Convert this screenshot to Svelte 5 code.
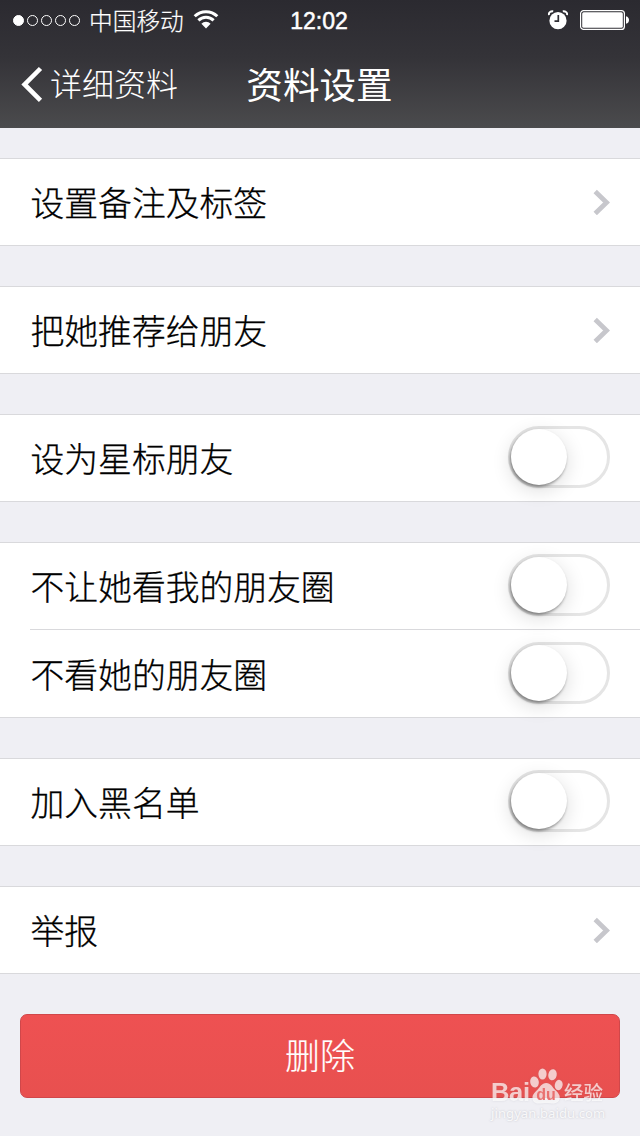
<script>
    let groups = $state([
        [{ label: '设置备注及标签', type: 'link' }],
        [{ label: '把她推荐给朋友', type: 'link' }],
        [{ label: '设为星标朋友', type: 'switch', on: false }],
        [
            { label: '不让她看我的朋友圈', type: 'switch', on: false },
            { label: '不看她的朋友圈', type: 'switch', on: false }
        ],
        [{ label: '加入黑名单', type: 'switch', on: false }],
        [{ label: '举报', type: 'link' }]
    ]);

    const signal = [true, false, false, false, false];

    function toggle(row) {
        row.on = !row.on;
    }
</script>

<div class="page">
    <header>
        <div class="status-bar">
            <div class="carrier">
                <div class="dots">
                    {#each signal as filled}
                        <span class="dot" class:filled></span>
                    {/each}
                </div>
                <span class="carrier-name">中国移动</span>
                <svg class="wifi" width="26" height="20" viewBox="0 0 26 20">
                    <path d="M1.7 6.3a16 16 0 0 1 22.6 0" />
                    <path d="M5.4 10.4a10.8 10.8 0 0 1 15.2 0" />
                    <path class="solid" d="M13 18.5l-4.6-4.8a6.5 6.5 0 0 1 9.2 0z" />
                </svg>
            </div>
            <span class="time">12:02</span>
            <div class="indicators">
                <svg class="alarm" width="20" height="20" viewBox="0 0 20 20">
                    <circle cx="10" cy="10.7" r="8.6" fill="#fff" />
                    <path d="M.8 5.2C.6 2.6 2.4.9 5.2 1.2M19.2 5.2c.2-2.6-1.6-4.3-4.4-4" stroke="#fff" stroke-width="2" fill="none" />
                    <path d="M10.3 5v6.2H6.5" stroke="#302f35" stroke-width="1.7" fill="none" />
                </svg>
                <svg class="battery" width="50" height="20" viewBox="0 0 50 20">
                    <rect x=".6" y=".6" width="43.8" height="18.8" rx="3" fill="none" stroke="#fff" stroke-width="1.2" />
                    <rect x="2.2" y="2.2" width="40.6" height="15.6" rx="1.5" fill="#fff" />
                    <path d="M46 6.2c4 .7 4 6.9 0 7.6z" fill="#fff" />
                </svg>
            </div>
        </div>
        <nav>
            <button class="back">
                <svg width="22" height="36" viewBox="0 0 22 36">
                    <path d="M19.5 2.5L3.6 18.5l15.9 15.8" fill="none" stroke="#fff" stroke-width="4.6" />
                </svg>
                <span>详细资料</span>
            </button>
            <h1>资料设置</h1>
        </nav>
    </header>

    <main>
        {#each groups as group}
            <section class="group">
                {#each group as row}
                    <div class="row">
                        <span class="label">{row.label}</span>
                        {#if row.type === 'switch'}
                            <button
                                class="switch"
                                class:on={row.on}
                                role="switch"
                                aria-checked={row.on}
                                aria-label={row.label}
                                onclick={() => toggle(row)}
                            >
                                <span class="knob"></span>
                            </button>
                        {:else}
                            <svg class="chevron" width="17" height="26" viewBox="0 0 17 26">
                                <path d="M2.2 2.5L13.6 13.5 2.2 24.5" fill="none" stroke="#c7c7cc" stroke-width="4.8" />
                            </svg>
                        {/if}
                    </div>
                {/each}
            </section>
        {/each}

        <button class="delete">删除</button>
    </main>

    <div class="watermark">
        <div class="brand">
            <span class="bai">Bai</span>
            <svg width="34" height="36" viewBox="0 0 34 36">
                <ellipse cx="5.5" cy="14" rx="4.3" ry="5.6" transform="rotate(-12 5.5 14)" />
                <ellipse cx="13.5" cy="6" rx="4.1" ry="5.6" />
                <ellipse cx="23.5" cy="6.8" rx="4.2" ry="5.6" transform="rotate(12 23.5 6.8)" />
                <ellipse cx="29.7" cy="17" rx="3.9" ry="5.2" transform="rotate(12 29.7 17)" />
                <path d="M17.2 15c4.6 0 6 4 8.500 6.600 3 3 5.500 5 5 9-.4 3-2.800 4.900-6 4.900-3 0-4.500-.6-7.500-.6s-4.500.6-7.500.6c-3.400 0-6-2-6.200-5.300-.2-3.800 2.500-5.800 5.200-8.600 2.500-2.600 4-6.600 8.500-6.600z" />
                <text x="17" y="32" text-anchor="middle">du</text>
            </svg>
            <span class="jingyan">经验</span>
        </div>
        <span class="domain">jingyan.baidu.com</span>
    </div>
</div>

<style>
    :global(body) {
        margin: 0;
        background: #efeff4;
    }

    .page {
        position: relative;
        width: 640px;
        height: 1136px;
        overflow: hidden;
        background: #efeff4;
        color: #000;
        font-family: "Noto Sans CJK SC", sans-serif;
        font-weight: 300;
    }

    button {
        font: inherit;
        color: inherit;
        padding: 0;
        border: none;
        background: none;
        cursor: pointer;
    }

    svg {
        display: block;
        flex: none;
    }

    header {
        height: 128px;
        background: linear-gradient(#2b2a30, #343338 45%, #4b4b4d);
        color: #fff;
    }

    .status-bar {
        display: grid;
        grid-template-columns: 1fr auto 1fr;
        align-items: center;
        height: 40px;
        padding: 0 10px 0 13px;
    }

    .carrier {
        display: flex;
        align-items: center;
    }

    .dots {
        display: flex;
        gap: 3px;
        margin-right: 9px;
    }

    .dot {
        box-sizing: border-box;
        width: 11px;
        height: 11px;
        border: 1px solid #fff;
        border-radius: 50%;
    }

    .dot.filled {
        background: #fff;
    }

    .carrier-name {
        font-size: 23.7px;
        line-height: 40px;
        -webkit-text-stroke: 0.2px #fff;
    }

    .wifi {
        margin-left: 9px;
        fill: none;
        stroke: #fff;
        stroke-width: 3;
    }

    .wifi .solid {
        fill: #fff;
        stroke: none;
    }

    .time {
        margin: 2px 5px 0 0;
        font-family: "Liberation Sans", sans-serif;
        font-size: 23px;
        font-weight: 400;
        -webkit-text-stroke: 0.5px #fff;
    }

    .indicators {
        display: flex;
        justify-content: flex-end;
        gap: 12px;
    }

    nav {
        display: grid;
        grid-template-columns: 1fr auto 1fr;
        align-items: center;
        height: 88px;
    }

    .back {
        display: flex;
        align-items: center;
        gap: 7px;
        padding-left: 21px;
        font-size: 32px;
        line-height: 84px;
    }

    .back span {
        margin-top: -4px;
    }

    h1 {
        margin: -1px 1px 0 0;
        font-size: 36.6px;
        font-weight: 400;
        line-height: 88px;
    }

    main {
        display: flex;
        flex-direction: column;
        gap: 40px;
        padding-top: 30px;
    }

    .group {
        box-sizing: border-box;
        border-top: 1px solid #d9d9dc;
        border-bottom: 1px solid #d9d9dc;
        background: #fff;
    }

    .row {
        box-sizing: border-box;
        display: flex;
        align-items: center;
        justify-content: space-between;
        height: 86px;
        margin-left: 30px;
        padding-right: 30px;
    }

    .row + .row {
        height: 88px;
        border-top: 1px solid #d9d9dc;
    }

    .label {
        padding-left: 0.5px;
        font-size: 33.8px;
        line-height: 86px;
        -webkit-text-stroke: 0.3px #000;
    }

    .switch {
        box-sizing: border-box;
        width: 102px;
        height: 62px;
        margin-top: -2px;
        border: 3px solid #e5e5e5;
        border-radius: 31px;
        background: #fff;
    }

    .switch.on {
        border-color: #4cd964;
        background: #4cd964;
    }

    .knob {
        display: block;
        width: 56px;
        height: 56px;
        border-radius: 50%;
        background: #fff;
        box-shadow: -1px 2px 3px rgba(0, 0, 0, 0.4), 0 5px 20px rgba(0, 0, 0, 0.14);
    }

    .switch.on .knob {
        margin-left: 40px;
    }

    .delete {
        box-sizing: border-box;
        height: 84px;
        margin: 0 20px;
        padding-bottom: 4px;
        border: 1px solid #d0474a;
        border-radius: 7px;
        background: linear-gradient(#ee5152, #e8504f);
        color: #fff;
        font-size: 35px;
        line-height: 76px;
        -webkit-text-stroke: 0.2px #fff;
    }

    .watermark {
        position: absolute;
        left: 491px;
        top: 1067px;
        width: 120px;
        color: rgba(255, 255, 255, 0.7);
    }

    .brand {
        display: flex;
        align-items: flex-end;
        height: 37px;
        filter: drop-shadow(0 0 1px rgba(120, 120, 130, 0.25));
    }

    .brand svg {
        fill: rgba(255, 255, 255, 0.7);
    }

    .brand text {
        fill: #e9706f;
        font: bold 16px "Liberation Sans", sans-serif;
    }

    .bai {
        width: 38px;
        font: bold 25.5px/23px "Liberation Sans", sans-serif;
        letter-spacing: -0.3px;
    }

    .jingyan {
        margin-left: 1px;
        font-size: 19.5px;
        font-weight: 500;
        line-height: 24px;
    }

    .domain {
        display: block;
        margin-top: 1px;
        font: 13px/16px "Noto Sans", sans-serif;
        letter-spacing: 0.1px;
        color: rgba(255, 255, 255, 0.85);
        text-shadow: 0 0 2px rgba(110, 110, 120, 0.35);
    }
</style>
